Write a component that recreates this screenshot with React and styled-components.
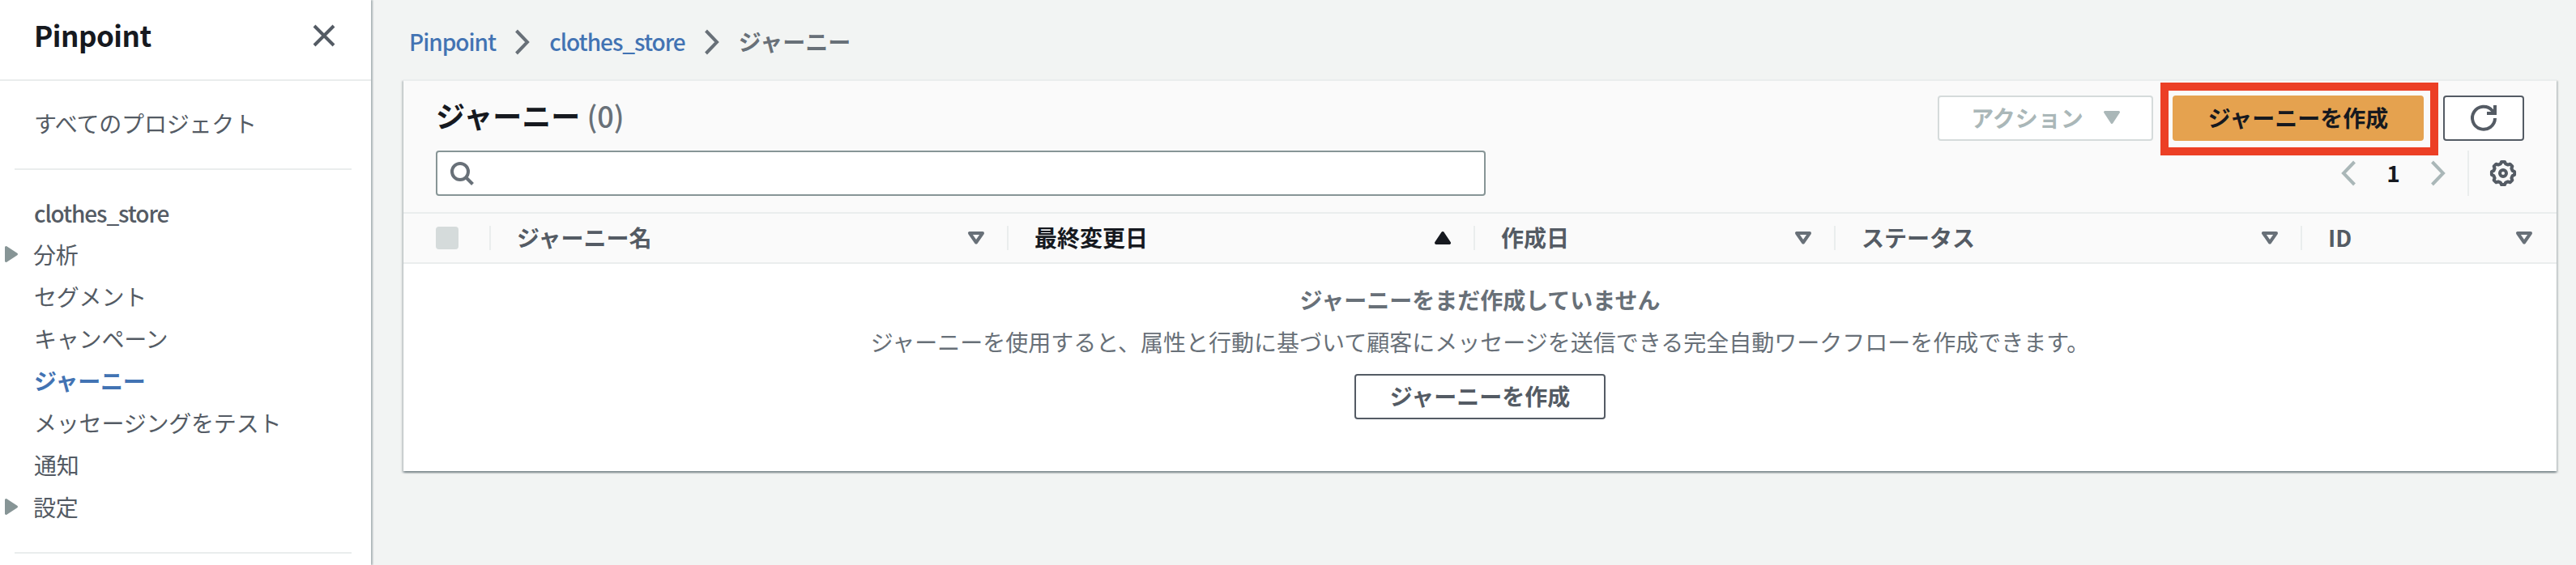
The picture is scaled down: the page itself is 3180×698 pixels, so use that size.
import React from "react";
import styled, { createGlobalStyle, css } from "styled-components";

const Global = createGlobalStyle`
  * { box-sizing: border-box; }
  body { margin: 0; background: #f2f3f3; overflow: hidden; }
  svg { display: block; flex: none; overflow: visible; }
`;

const Page = styled.div`
  display: flex;
  width: 3180px;
  height: 698px;
  overflow: hidden;
  background: #f2f4f3;
  color: #545b64;
  font-family: "Noto Sans CJK JP", "Noto Sans", sans-serif;
  font-size: 28px;
  line-height: 44px;
`;

const Sidebar = styled.aside`
  width: 458px;
  flex: none;
  background: #fff;
  box-shadow: 2px 0 2px rgba(0, 28, 36, 0.3);
`;

const SideHeader = styled.header`
  display: flex;
  justify-content: space-between;
  height: 100px;
  padding: 21px 44px 0 42px;
  border-bottom: 2px solid #eaeded;
  color: #16191f;
  font-weight: 700;
`;

const ServiceName = styled.span`
  font-size: 35px;
  letter-spacing: -0.5px;
`;

const CloseIcon = styled.svg`
  margin-top: 9px;
`;

const Nav = styled.nav`
  display: flex;
  flex-direction: column;
  padding: 0 24px 0 18px;
`;

const Divider = styled.hr`
  width: 100%;
  margin: 0;
  border: 0;
  border-top: 2px solid #eaeded;
`;

const NavList = styled.ul`
  list-style: none;
  margin: 0;
  padding: ${(p) => p.$pad};
`;

const NavItem = styled.li`
  display: flex;
  align-items: center;
  height: 52px;
  padding-left: 24px;
  font-weight: ${(p) => (p.$active ? 700 : 400)};
  letter-spacing: -0.2px;
  color: ${(p) => (p.$active ? "#4273b3" : "#545b64")};
  ${(p) =>
    p.$latin &&
    css`
      padding-top: 2px;
      font-weight: 500;
      letter-spacing: -1.1px;
    `}
  ${(p) =>
    p.$expandable &&
    css`
      padding-left: 0;
      margin-left: -12px;
      gap: 19px;
    `}
`;

const Main = styled.main`
  flex: 1;
  padding: 0 24px 0 40px;
`;

const Breadcrumbs = styled.div`
  display: flex;
  align-items: center;
  height: 98px;
  padding: 6px 0 0 7px;
  gap: 24px;
`;

const Crumb = styled.span`
  margin-top: -2px;
  color: #687078;
  font-weight: 700;
  ${(p) =>
    p.$link &&
    css`
      color: #4273b3;
      letter-spacing: -1px;
      font-weight: 450;
    `}
`;

const Panel = styled.section`
  height: 484px;
  background: #fff;
  border-top: 2px solid #eaeded;
  box-shadow: 0 2px 2px rgba(0, 28, 36, 0.3), 2px 2px 2px rgba(0, 28, 36, 0.15),
    -2px 2px 2px rgba(0, 28, 36, 0.15);
`;

const PanelHeader = styled.div`
  height: 164px;
  padding: 18px 40px 0;
  background: #fafafa;
  border-bottom: 2px solid #eaeded;
`;

const HeaderRow = styled.div`
  display: flex;
  justify-content: space-between;
  align-items: center;
  height: 56px;
  margin-bottom: 12px;
`;

const Title = styled.h2`
  margin: 0 0 8px;
  color: #16191f;
  font-size: 36px;
  font-weight: 700;
`;

const Count = styled.span`
  color: #687078;
  font-weight: 500;
`;

const Actions = styled.div`
  display: flex;
  gap: 24px;
`;

const Button = styled.button`
  display: flex;
  align-items: center;
  justify-content: center;
  position: relative;
  width: ${(p) => p.$width}px;
  height: 56px;
  padding: 0 0 2px;
  background: #fff;
  border: 2px solid #545b64;
  border-radius: 4px;
  color: #545b64;
  font: inherit;
  font-weight: 700;
  ${(p) =>
    p.$variant === "primary" &&
    css`
      background: #e5a24f;
      border-color: #e5a24f;
      color: #16191f;
    `}
  ${(p) =>
    p.$variant === "disabled" &&
    css`
      gap: 25px;
      border-color: #d5dbdb;
      color: #aab7b8;
    `}
`;

const IconButton = styled(Button)`
  padding: 0;
`;

const Highlight = styled.span`
  position: absolute;
  left: -17px;
  top: -18px;
  width: 343px;
  height: 90px;
  border: 10px solid #ec3f25;
  pointer-events: none;
`;

const SearchBox = styled.div`
  display: flex;
  align-items: center;
  width: 1296px;
  height: 56px;
  padding-left: 16px;
  background: #fff;
  border: 2px solid #879596;
  border-radius: 4px;
`;

const Pager = styled.div`
  display: flex;
  align-items: center;
  height: 56px;
`;

const PageNumber = styled.span`
  width: 93px;
  margin-top: -2px;
  text-align: center;
  color: #16191f;
  font-weight: 700;
`;

const Settings = styled.div`
  display: flex;
  align-items: center;
  height: 56px;
  margin-left: 27px;
  padding: 0 10px 0 26px;
  border-left: 2px solid #eaeded;
`;

const TableHead = styled.div`
  display: flex;
  align-items: center;
  height: 62px;
  background: #fafafa;
  border-bottom: 2px solid #eaeded;
`;

const HeadCell = styled.div`
  display: flex;
  align-items: center;
  justify-content: space-between;
  width: ${(p) => p.$width}px;
  height: 30px;
  padding: 0 ${(p) => (p.$last ? 30 : 28)}px 0 32px;
  border-right: ${(p) => (p.$last ? "0" : "2px solid #eaeded")};
  color: ${(p) => (p.$sorted ? "#16191f" : "#545b64")};
  font-weight: 700;
`;

const HeadLabel = styled.span`
  margin-top: -2px;
`;

const SelectCell = styled(HeadCell)`
  padding: 0 0 0 40px;
`;

const Checkbox = styled.span`
  width: 28px;
  height: 28px;
  background: #d5dbdb;
  border-radius: 4px;
`;

const Empty = styled.div`
  display: flex;
  flex-direction: column;
  align-items: center;
  padding-top: 22px;
  color: #687078;
`;

const EmptyTitle = styled.strong`
  font-weight: 700;
`;

const EmptyText = styled.p`
  margin: 8px 0 18px;
`;

const Caret = () => (
  <svg width="16" height="20" viewBox="0 0 16 20">
    <path d="M1.5 1.5 14.5 10 1.5 18.5Z" fill="#879596" stroke="#879596" strokeWidth="3" strokeLinejoin="round" />
  </svg>
);

const Chevron = ({ flip, color = "#687078" }) => (
  <svg width="18" height="30" viewBox="0 0 18 30">
    <path
      d={flip ? "M16.5 1 3 15 16.5 29" : "M1.5 1 15 15 1.5 29"}
      fill="none"
      stroke={color}
      strokeWidth="4"
    />
  </svg>
);

const SortIcon = ({ up }) => (
  <svg width="20" height="16" viewBox="0 0 20 16">
    {up ? (
      <path d="M10 2 18 14H2Z" fill="#16191f" stroke="#16191f" strokeWidth="4" strokeLinejoin="round" />
    ) : (
      <path d="M2 2H18L10 13.5Z" fill="none" stroke="#687078" strokeWidth="4" strokeLinejoin="round" />
    )}
  </svg>
);

const SearchIcon = () => (
  <svg width="30" height="30" viewBox="0 0 30 30">
    <circle cx="12" cy="13" r="10" fill="none" stroke="#687078" strokeWidth="4" />
    <path d="m19 20 8.5 8.5" stroke="#687078" strokeWidth="4" />
  </svg>
);

const RefreshIcon = () => (
  <svg width="32" height="32" viewBox="0 0 32 32">
    <path d="M30 16A14 14 0 1 1 26.5 6.5L29 9" fill="none" stroke="#545b64" strokeWidth="4" />
    <path d="M30 0V10H20" fill="none" stroke="#545b64" strokeWidth="4" />
  </svg>
);

const gear = (() => {
  const pts = [];
  for (let i = 0; i < 8; i++) {
    const at = (deg, r) => {
      const a = ((i * 45 + deg) * Math.PI) / 180;
      return `${(16 + r * Math.sin(a)).toFixed(2)} ${(16 - r * Math.cos(a)).toFixed(2)}`;
    };
    pts.push(at(-8, 14.2), at(8, 14.2), at(15, 12), at(30, 12));
  }
  return `M${pts.join("L")}Z`;
})();

const GearIcon = () => (
  <svg width="32" height="32" viewBox="0 0 32 32">
    <path d={gear} fill="none" stroke="#545b64" strokeWidth="4" strokeLinejoin="round" />
    <circle cx="16" cy="16" r="4" fill="none" stroke="#545b64" strokeWidth="4" />
  </svg>
);

const columns = [
  { label: "ジャーニー名", width: 639 },
  { label: "最終変更日", width: 576, sorted: true },
  { label: "作成日", width: 445 },
  { label: "ステータス", width: 576 },
  { label: "ID", width: 314, last: true },
];

export default function App() {
  return (
    <Page>
      <Global />
      <Sidebar>
        <SideHeader>
          <ServiceName>Pinpoint</ServiceName>
          <CloseIcon width="28" height="28" viewBox="0 0 28 28">
            <path d="M2 2 26 26M26 2 2 26" stroke="#545b64" strokeWidth="4" />
          </CloseIcon>
        </SideHeader>
        <Nav>
          <NavList $pad="26px 0 30px">
            <NavItem>すべてのプロジェクト</NavItem>
          </NavList>
          <Divider />
          <NavList $pad="26px 0 30px">
            <NavItem $latin>clothes_store</NavItem>
            <NavItem $expandable><Caret />分析</NavItem>
            <NavItem>セグメント</NavItem>
            <NavItem>キャンペーン</NavItem>
            <NavItem $active>ジャーニー</NavItem>
            <NavItem>メッセージングをテスト</NavItem>
            <NavItem>通知</NavItem>
            <NavItem $expandable><Caret />設定</NavItem>
          </NavList>
          <Divider />
        </Nav>
      </Sidebar>
      <Main>
        <Breadcrumbs>
          <Crumb $link>Pinpoint</Crumb>
          <Chevron />
          <Crumb $link>clothes_store</Crumb>
          <Chevron />
          <Crumb>ジャーニー</Crumb>
        </Breadcrumbs>
        <Panel>
          <PanelHeader>
            <HeaderRow>
              <Title>ジャーニー <Count>(0)</Count></Title>
              <Actions>
                <Button $width={266} $variant="disabled">
                  アクション
                  <svg width="20" height="16" viewBox="0 0 20 16">
                    <path d="M1.5 1.5H18.5L10 14.5Z" fill="#aab7b8" stroke="#aab7b8" strokeWidth="3" strokeLinejoin="round" />
                  </svg>
                </Button>
                <Button $width={310} $variant="primary">
                  ジャーニーを作成
                  <Highlight />
                </Button>
                <IconButton $width={100}><RefreshIcon /></IconButton>
              </Actions>
            </HeaderRow>
            <HeaderRow>
              <SearchBox><SearchIcon /></SearchBox>
              <Pager>
                <Chevron flip color="#aab7b8" />
                <PageNumber>1</PageNumber>
                <Chevron color="#aab7b8" />
                <Settings><GearIcon /></Settings>
              </Pager>
            </HeaderRow>
          </PanelHeader>
          <TableHead>
            <SelectCell $width={108}><Checkbox /></SelectCell>
            {columns.map((c) => (
              <HeadCell key={c.label} $width={c.width} $sorted={c.sorted} $last={c.last}>
                <HeadLabel>{c.label}</HeadLabel>
                <SortIcon up={c.sorted} />
              </HeadCell>
            ))}
          </TableHead>
          <Empty>
            <EmptyTitle>ジャーニーをまだ作成していません</EmptyTitle>
            <EmptyText>ジャーニーを使用すると、属性と行動に基づいて顧客にメッセージを送信できる完全自動ワークフローを作成できます。</EmptyText>
            <Button $width={310}>ジャーニーを作成</Button>
          </Empty>
        </Panel>
      </Main>
    </Page>
  );
}
